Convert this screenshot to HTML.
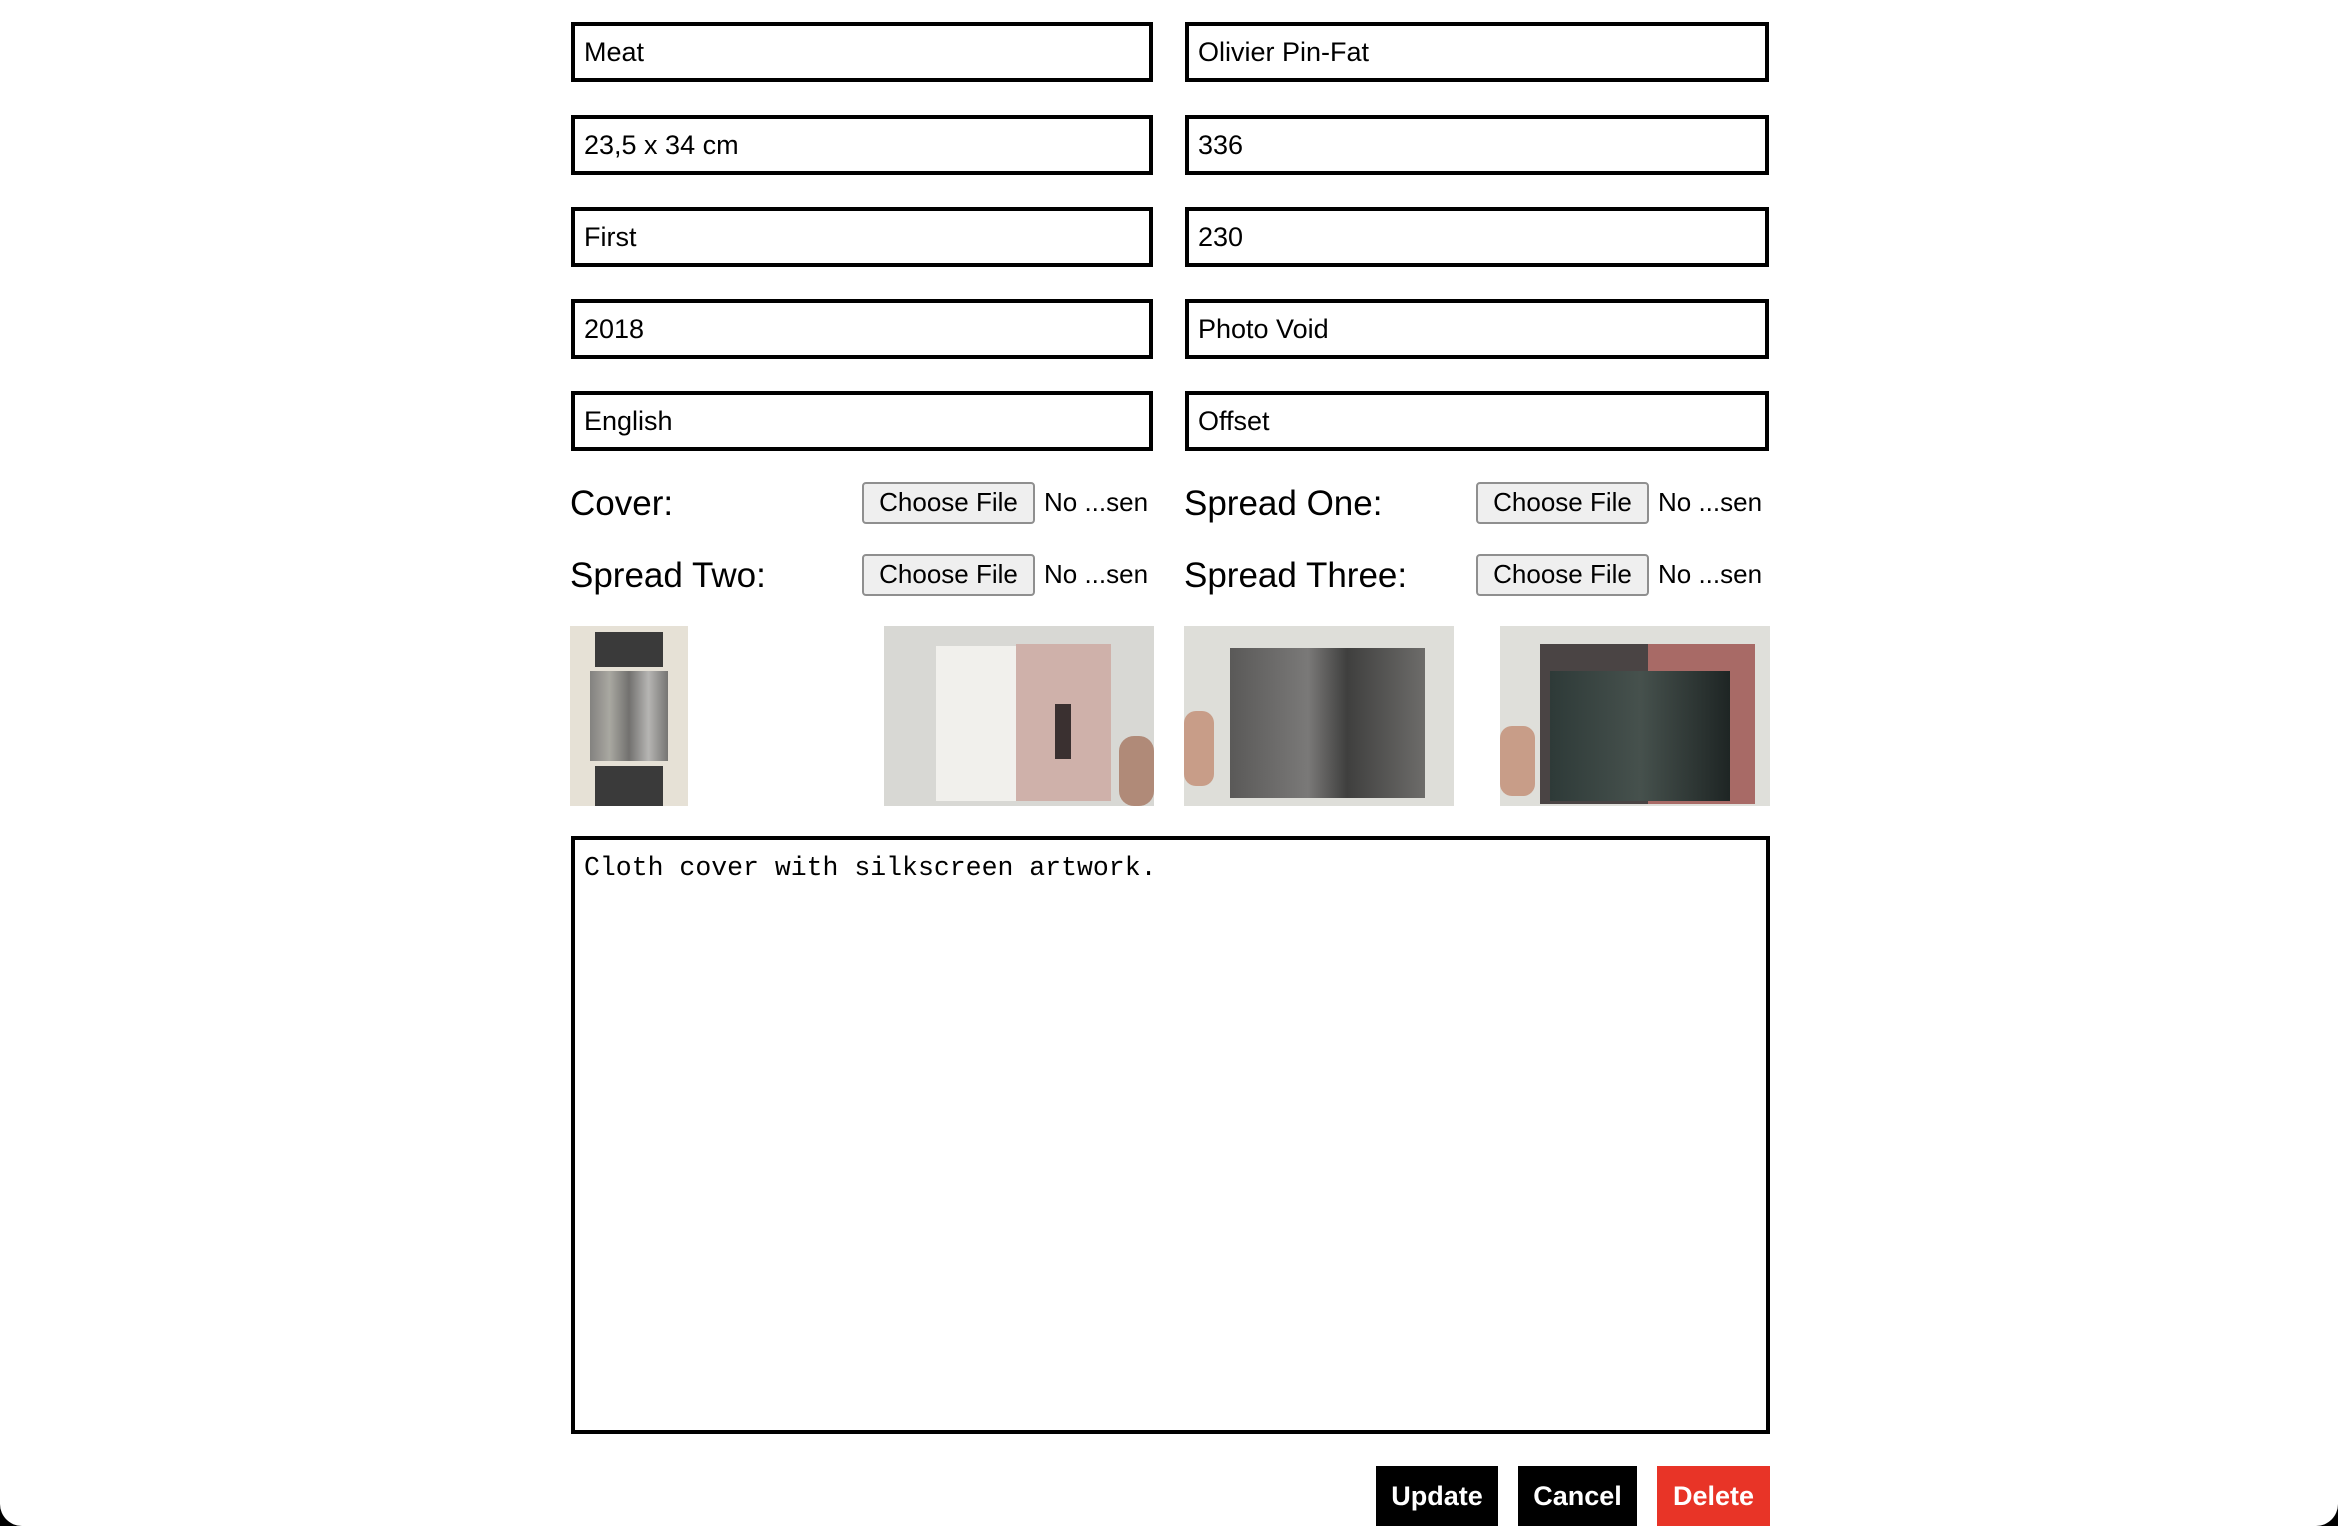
<!DOCTYPE html>
<html><head><meta charset="utf-8"><style>
html,body{margin:0;padding:0;background:#000;}
#w{position:relative;width:2338px;height:1526px;background:#fff;border-radius:0 0 22px 22px;overflow:hidden;font-family:"Liberation Sans",sans-serif;}
.in{position:absolute;box-sizing:border-box;height:60px;border:4px solid #000;font-size:27px;line-height:52px;padding-left:9px;color:#000;}
.l{left:571px;width:582px}.r{left:1185px;width:584px}
.lab{position:absolute;font-size:35px;color:#000;line-height:40px;}
.btn{position:absolute;box-sizing:border-box;width:173px;height:42px;border:2px solid #8f8f8f;border-radius:4px;background:#efefef;font-size:26px;text-align:center;line-height:37px;color:#000;}
.ns{position:absolute;font-size:26px;line-height:40px;}
.img{position:absolute;top:626px;height:180px;overflow:hidden;}
.b{position:absolute;top:1466px;height:60px;color:#fff;font-weight:bold;font-size:27px;text-align:center;line-height:60px;}
</style></head><body><div id="w">
<div class="in l" style="top:22px">Meat</div><div class="in r" style="top:22px">Olivier Pin-Fat</div>
<div class="in l" style="top:115px">23,5 x 34 cm</div><div class="in r" style="top:115px">336</div>
<div class="in l" style="top:207px">First</div><div class="in r" style="top:207px">230</div>
<div class="in l" style="top:299px">2018</div><div class="in r" style="top:299px">Photo Void</div>
<div class="in l" style="top:391px">English</div><div class="in r" style="top:391px">Offset</div>

<div class="lab" style="left:570px;top:484px">Cover:</div>
<div class="btn" style="left:862px;top:482px">Choose File</div><div class="ns" style="left:1044px;top:482px">No ...sen</div>
<div class="lab" style="left:1184px;top:484px">Spread One:</div>
<div class="btn" style="left:1476px;top:482px">Choose File</div><div class="ns" style="left:1658px;top:482px">No ...sen</div>
<div class="lab" style="left:570px;top:556px">Spread Two:</div>
<div class="btn" style="left:862px;top:554px">Choose File</div><div class="ns" style="left:1044px;top:554px">No ...sen</div>
<div class="lab" style="left:1184px;top:556px">Spread Three:</div>
<div class="btn" style="left:1476px;top:554px">Choose File</div><div class="ns" style="left:1658px;top:554px">No ...sen</div>

<div class="img" style="left:570px;width:118px;background:#e6e1d6;">
 <div style="position:absolute;left:25px;top:6px;width:68px;height:35px;background:#3a3a3a"></div>
 <div style="position:absolute;left:20px;top:45px;width:78px;height:90px;background:linear-gradient(90deg,#6a6a6a,#9a9a94,#555,#aaa,#5a5a5a);opacity:.8"></div>
 <div style="position:absolute;left:25px;top:140px;width:68px;height:40px;background:#3a3a3a"></div>
</div>
<div class="img" style="left:884px;width:270px;background:#d8d8d4;">
 <div style="position:absolute;left:52px;top:20px;width:80px;height:155px;background:#f1f0ec"></div>
 <div style="position:absolute;left:132px;top:18px;width:95px;height:157px;background:#cfb1aa"></div>
 <div style="position:absolute;left:171px;top:78px;width:16px;height:55px;background:#3a3030"></div>
 <div style="position:absolute;left:235px;top:110px;width:35px;height:70px;background:#b08a78;border-radius:15px"></div>
</div>
<div class="img" style="left:1184px;width:270px;background:#deded9;">
 <div style="position:absolute;left:46px;top:22px;width:195px;height:150px;background:linear-gradient(90deg,#5a5958,#7a7978 40%,#3f3f3e 60%,#6d6c6a)"></div>
 <div style="position:absolute;left:0;top:85px;width:30px;height:75px;background:#c89d88;border-radius:12px"></div>
</div>
<div class="img" style="left:1500px;width:270px;background:#dfdfda;">
 <div style="position:absolute;left:40px;top:18px;width:215px;height:160px;background:#4a4444"></div>
 <div style="position:absolute;left:148px;top:18px;width:107px;height:160px;background:#a86a66"></div>
 <div style="position:absolute;left:50px;top:45px;width:180px;height:130px;background:linear-gradient(90deg,#2e3a38,#46514d,#1e2524)"></div>
 <div style="position:absolute;left:0;top:100px;width:35px;height:70px;background:#c89d88;border-radius:12px"></div>
</div>

<div style="position:absolute;left:571px;top:836px;width:1199px;height:598px;box-sizing:border-box;border:4px solid #000;font-family:'Liberation Mono',monospace;font-size:26.5px;padding:13px 9px;">Cloth cover with silkscreen artwork.</div>

<div class="b" style="left:1376px;width:122px;background:#000">Update</div>
<div class="b" style="left:1518px;width:119px;background:#000">Cancel</div>
<div class="b" style="left:1657px;width:113px;background:#e83427">Delete</div>
</div></body></html>
